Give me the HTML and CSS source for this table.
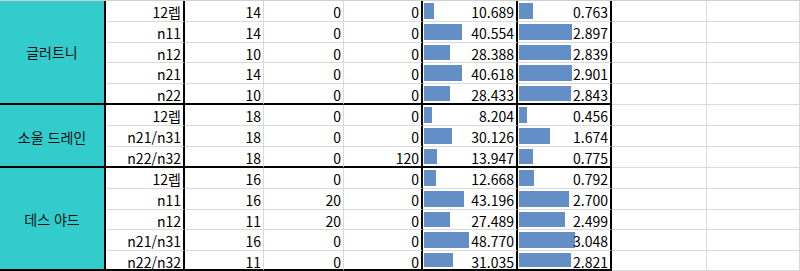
FILE: index.html
```html
<!DOCTYPE html>
<html lang="ko">
<head>
<meta charset="utf-8">
<link rel="stylesheet" href="styles.css">
</head>
<body>
<div class="sheet">
  <div class="group g5">글러트니</div>
  <div class="c name">12렙</div><div class="c">14</div><div class="c">0</div><div class="c tr">0</div><div class="c bar tr"><span class="fill" style="width:9.9px"></span><span class="v">10.689</span></div><div class="c bar tr"><span class="fill" style="width:14.0px"></span><span class="v">0.763</span></div><div class="c"></div><div class="c"></div>
  <div class="c name">n11</div><div class="c">14</div><div class="c">0</div><div class="c tr">0</div><div class="c bar tr"><span class="fill" style="width:37.7px"></span><span class="v">40.554</span></div><div class="c bar tr"><span class="fill" style="width:53.3px"></span><span class="v">2.897</span></div><div class="c"></div><div class="c"></div>
  <div class="c name">n12</div><div class="c">10</div><div class="c">0</div><div class="c tr">0</div><div class="c bar tr"><span class="fill" style="width:26.4px"></span><span class="v">28.388</span></div><div class="c bar tr"><span class="fill" style="width:52.2px"></span><span class="v">2.839</span></div><div class="c"></div><div class="c"></div>
  <div class="c name">n21</div><div class="c">14</div><div class="c">0</div><div class="c tr">0</div><div class="c bar tr"><span class="fill" style="width:37.8px"></span><span class="v">40.618</span></div><div class="c bar tr"><span class="fill" style="width:53.4px"></span><span class="v">2.901</span></div><div class="c"></div><div class="c"></div>
  <div class="c name end">n22</div><div class="c end">10</div><div class="c end">0</div><div class="c tr end">0</div><div class="c bar tr end"><span class="fill" style="width:26.4px"></span><span class="v">28.433</span></div><div class="c bar tr end"><span class="fill" style="width:52.3px"></span><span class="v">2.843</span></div><div class="c"></div><div class="c"></div>

  <div class="group g3">소울 드레인</div>
  <div class="c name">12렙</div><div class="c">18</div><div class="c">0</div><div class="c tr">0</div><div class="c bar tr"><span class="fill" style="width:7.6px"></span><span class="v">8.204</span></div><div class="c bar tr"><span class="fill" style="width:8.4px"></span><span class="v">0.456</span></div><div class="c"></div><div class="c"></div>
  <div class="c name">n21/n31</div><div class="c">18</div><div class="c">0</div><div class="c tr">0</div><div class="c bar tr"><span class="fill" style="width:28.0px"></span><span class="v">30.126</span></div><div class="c bar tr"><span class="fill" style="width:30.8px"></span><span class="v">1.674</span></div><div class="c"></div><div class="c"></div>
  <div class="c name end">n22/n32</div><div class="c end">18</div><div class="c end">0</div><div class="c tr end">120</div><div class="c bar tr end"><span class="fill" style="width:13.0px"></span><span class="v">13.947</span></div><div class="c bar tr end"><span class="fill" style="width:14.3px"></span><span class="v">0.775</span></div><div class="c"></div><div class="c"></div>

  <div class="group g5">데스 야드</div>
  <div class="c name">12렙</div><div class="c">16</div><div class="c">0</div><div class="c tr">0</div><div class="c bar tr"><span class="fill" style="width:11.8px"></span><span class="v">12.668</span></div><div class="c bar tr"><span class="fill" style="width:14.6px"></span><span class="v">0.792</span></div><div class="c"></div><div class="c"></div>
  <div class="c name">n11</div><div class="c">16</div><div class="c">20</div><div class="c tr">0</div><div class="c bar tr"><span class="fill" style="width:40.2px"></span><span class="v">43.196</span></div><div class="c bar tr"><span class="fill" style="width:49.7px"></span><span class="v">2.700</span></div><div class="c"></div><div class="c"></div>
  <div class="c name">n12</div><div class="c">11</div><div class="c">20</div><div class="c tr">0</div><div class="c bar tr"><span class="fill" style="width:25.6px"></span><span class="v">27.489</span></div><div class="c bar tr"><span class="fill" style="width:46.0px"></span><span class="v">2.499</span></div><div class="c"></div><div class="c"></div>
  <div class="c name">n21/n31</div><div class="c">16</div><div class="c">0</div><div class="c tr">0</div><div class="c bar tr"><span class="fill" style="width:45.4px"></span><span class="v">48.770</span></div><div class="c bar tr"><span class="fill" style="width:56.1px"></span><span class="v">3.048</span></div><div class="c"></div><div class="c"></div>
  <div class="c name end">n22/n32</div><div class="c end">11</div><div class="c end">0</div><div class="c tr end">0</div><div class="c bar tr end"><span class="fill" style="width:28.9px"></span><span class="v">31.035</span></div><div class="c bar tr end"><span class="fill" style="width:51.9px"></span><span class="v">2.821</span></div><div class="c"></div><div class="c"></div>
</div>
</body>
</html>
```

FILE: styles.css
```css
html, body {
  margin: 0;
  padding: 0;
  background: #ffffff;
}

.sheet {
  width: 800px;
  height: 271px;
  box-sizing: border-box;
  border-top: 1px solid #cfcfcf;
  display: grid;
  grid-template-columns: 106px 79px 79px 80px 79px 95px 94px 95px 93px;
  grid-template-rows: 21px 21px 20px 21px 21px 21px 21px 21px 21px 21px 20px 21px 20px;
  font-family: "Noto Sans CJK KR", "Noto Sans", sans-serif;
  font-size: 14px;
  color: #000;
  overflow: hidden;
}

.group {
  background: #33cccc;
  border-right: 2px solid #000;
  border-bottom: 2px solid #000;
  display: flex;
  align-items: center;
  justify-content: center;
  font-size: 14px;
  color: #111;
}

.g5 { grid-row: span 5; }
.g3 { grid-row: span 3; padding-top: 3px; box-sizing: border-box; }

.c {
  box-sizing: border-box;
  border-right: 1px solid #dadada;
  border-bottom: 1px solid #dadada;
  text-align: right;
  padding: 2px 2px 0 0;
  line-height: 18px;
  white-space: nowrap;
  overflow: hidden;
}

.name,
.tr {
  border-right: 2px solid #000;
}

.end {
  border-bottom: 2px solid #000;
}

.bar {
  position: relative;
}

.fill {
  position: absolute;
  left: 1px;
  top: 2px;
  bottom: 2px;
  background: #638ec6;
}

.v {
  position: relative;
}
```
